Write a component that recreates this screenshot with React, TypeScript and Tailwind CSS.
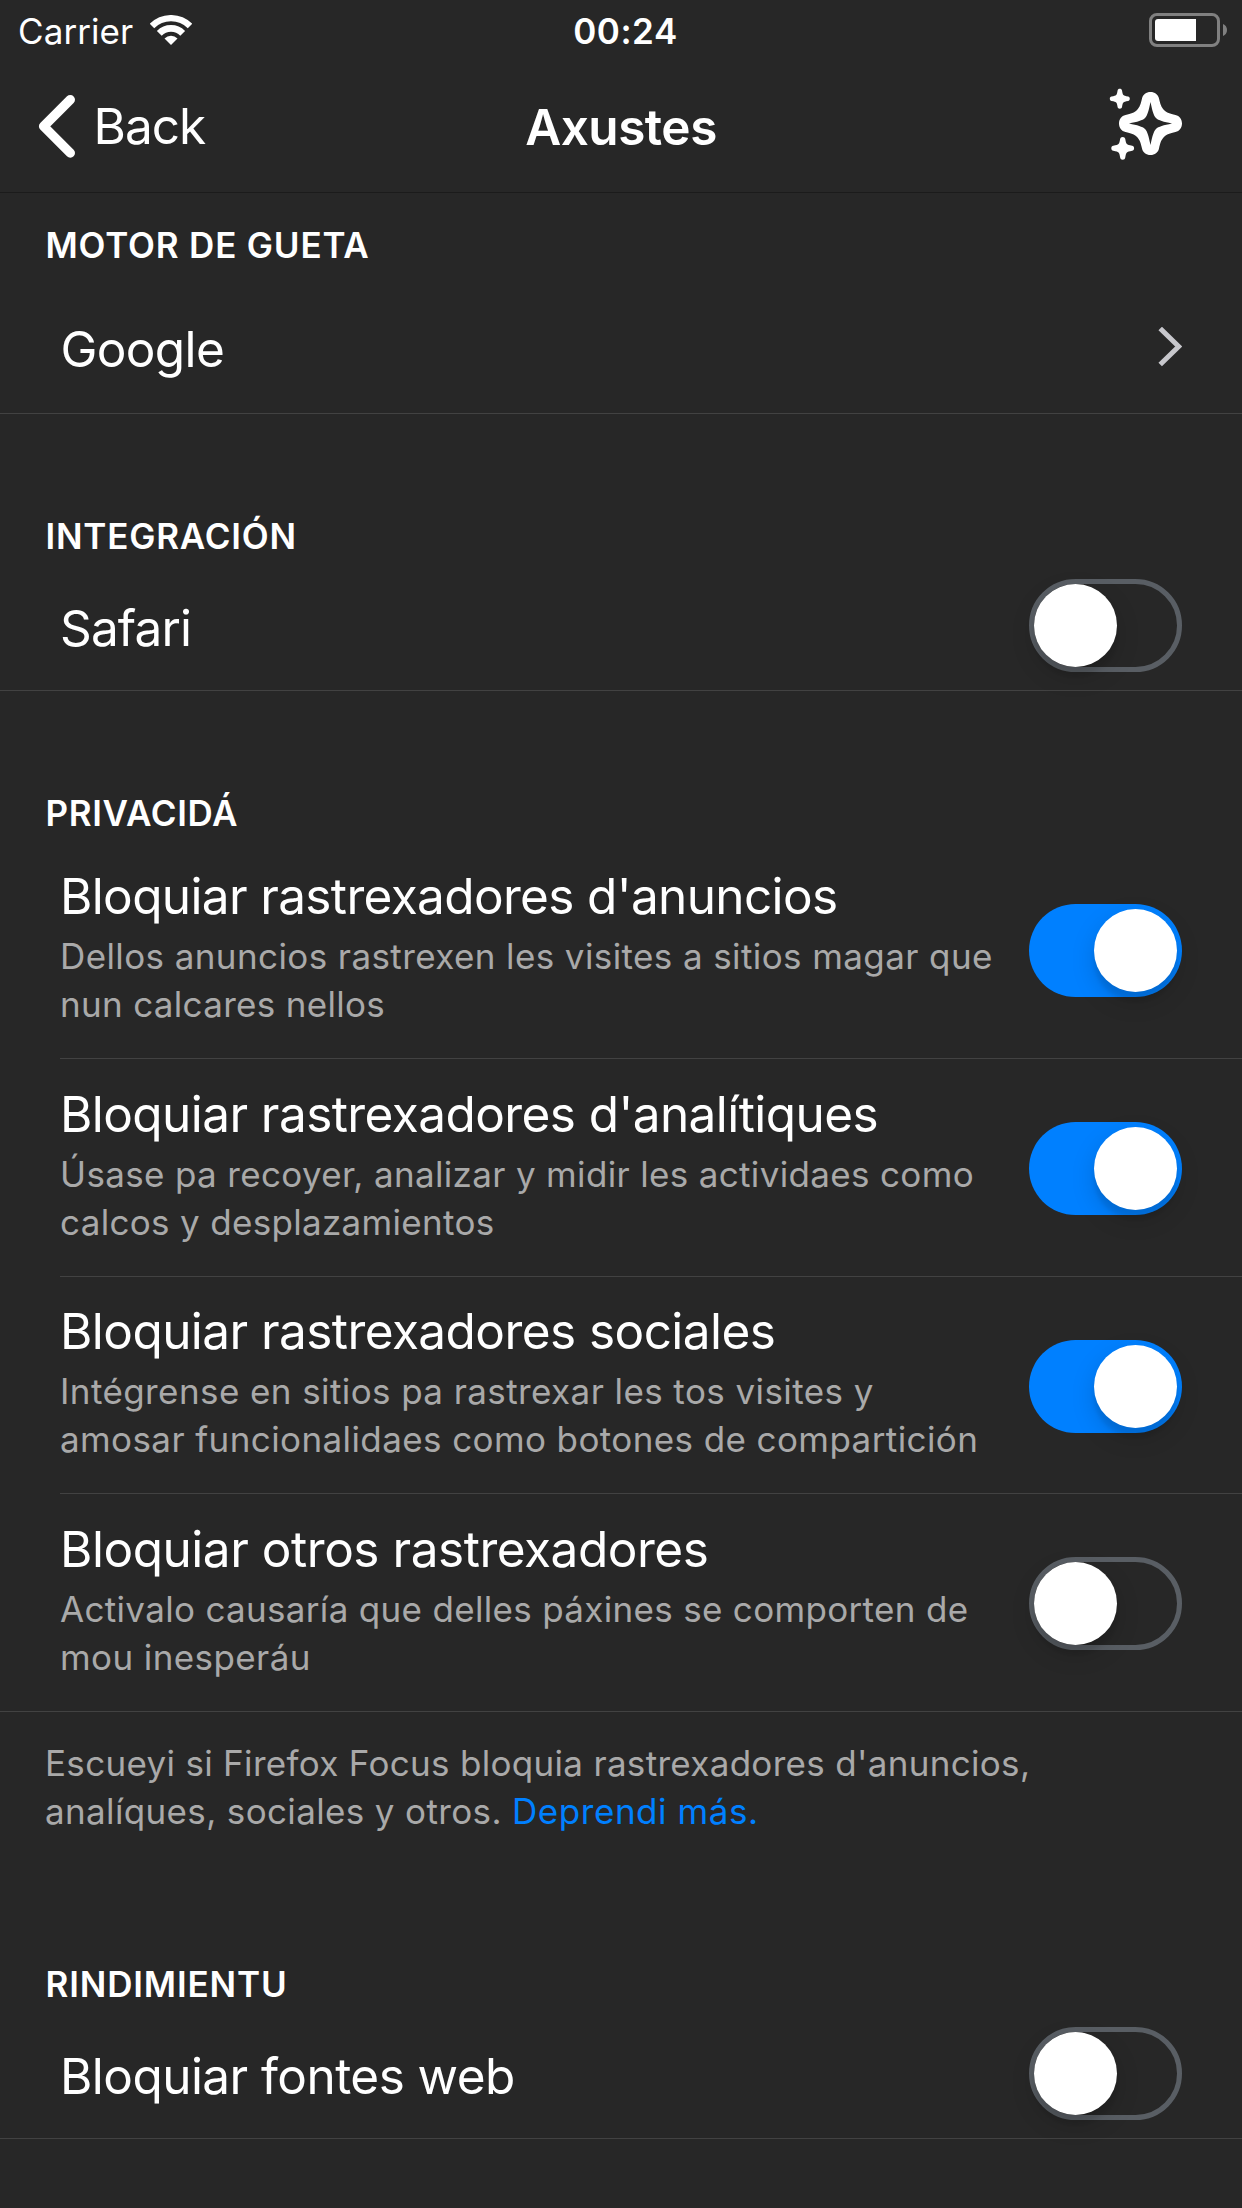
import React from "react";

type Line = { text: string; tracking: string };

function WifiIcon() {
  return (
    <svg className="h-[30px] w-[42px]" viewBox="0 0 42 30" fill="none">
      <path d="M2 11A26.9 26.9 0 0 1 40 11" stroke="#fff" strokeWidth="6.3" />
      <path d="M9.3 18.3A16.5 16.5 0 0 1 32.7 18.3" stroke="#fff" strokeWidth="6.8" />
      <path d="M21 30L14.5 23.5A9.2 9.2 0 0 1 27.5 23.5Z" fill="#fff" />
    </svg>
  );
}

function BatteryIcon() {
  return (
    <svg className="h-10 w-[84px]" viewBox="0 0 84 40">
      <rect x="4.5" y="4.5" width="68" height="31" rx="6.5" fill="none" stroke="#808080" strokeWidth="3" />
      <path d="M12 9H50V31H12Q9 31 9 28V12Q9 9 12 9Z" fill="#fff" />
      <path d="M77 14C79.500 15 81 17.300 81 20S79.500 25 77 26Z" fill="#808080" />
    </svg>
  );
}

function BackChevron() {
  return (
    <svg className="h-[72px] w-11" viewBox="0 0 44 72" fill="none">
      <path
        d="M34.300 9.700L7.600 36.300L34.300 63"
        stroke="#fff"
        strokeWidth="9.4"
        strokeLinecap="round"
        strokeLinejoin="round"
      />
    </svg>
  );
}

function DisclosureChevron() {
  return (
    <svg className="h-10 w-6" viewBox="0 0 24 40" fill="none">
      <path d="M2.200 1.500L20.700 19.500L2.200 37.500" stroke="#c7c7cc" strokeWidth="5" />
    </svg>
  );
}

const SMALL_STAR =
  "M0-10C1.3-10 2-9.3 2.2-8.3C2.700-5.500 2.900-4.400 3.700-3.700C4.400-2.900 5.500-2.700 8.300-2.200C9.300-2 10-1.300 10 0C10 1.300 9.300 2 8.300 2.200C5.500 2.700 4.400 2.900 3.700 3.700C2.900 4.400 2.700 5.500 2.200 8.300C2 9.300 1.300 10 0 10C-1.300 10-2 9.300-2.200 8.300C-2.700 5.500-2.900 4.400-3.700 3.700C-4.400 2.900-5.500 2.700-8.300 2.200C-9.300 2-10 1.300-10 0C-10-1.300-9.300-2-8.300-2.200C-5.500-2.700-4.400-2.900-3.700-3.700C-2.900-4.400-2.700-5.500-2.200-8.300C-2-9.300-1.300-10 0-10Z";

const BIG_STAR =
  "M0-31.500C4.300-31.500 7.600-29 8.500-25C9.800-19.300 10.800-16.200 13.500-13.500C16.200-10.800 19.300-9.800 25-8.500C29-7.600 31.500-4.300 31.500 0C31.500 4.300 29 7.600 25 8.500C19.300 9.800 16.200 10.800 13.500 13.500C10.800 16.200 9.800 19.300 8.500 25C7.600 29 4.300 31.500 0 31.500C-4.300 31.500-7.600 29-8.500 25C-9.800 19.300-10.800 16.200-13.500 13.500C-16.200 10.800-19.300 9.800-25 8.500C-29 7.600-31.500 4.300-31.500 0C-31.500-4.300-29-7.600-25-8.500C-19.300-9.800-16.200-10.800-13.500-13.500C-10.800-16.200-9.800-19.300-8.500-25C-7.600-29-4.300-31.500 0-31.500Z" +
  "M0-21.500C1.800-13 3-8 5.500-5.500C8-3 13-1.800 21.500 0C13 1.800 8 3 5.500 5.500C3 8 1.800 13 0 21.500C-1.800 13-3 8-5.500 5.500C-8 3-13 1.800-21.500 0C-13-1.800-8-3-5.500-5.500C-3-8-1.800-13 0-21.500Z";

function SparklesIcon() {
  return (
    <svg className="h-20 w-[76px]" viewBox="1108 86 76 80" fill="#fff">
      <path d={BIG_STAR} fillRule="evenodd" transform="translate(1150.500 123.500)" />
      <path d={SMALL_STAR} transform="translate(1119.800 98.700)" />
      <path d={SMALL_STAR} transform="translate(1122.700 148.300) scale(1.140)" />
    </svg>
  );
}

function Switch({ on, className = "" }: { on: boolean; className?: string }) {
  return (
    <div
      role="switch"
      aria-checked={on}
      className={`flex h-[93px] w-[153px] shrink-0 items-center rounded-full ${
        on ? "justify-end bg-[#0080ff] pr-[5px]" : "border-[5px] border-[#595e64]"
      } ${className}`}
    >
      <div className="size-[83px] rounded-full bg-white shadow-[0_9px_24px_rgba(0,0,0,0.15),0_9px_4px_rgba(0,0,0,0.08)]" />
    </div>
  );
}

function SectionHeader({ children, className }: { children: React.ReactNode; className: string }) {
  return <h2 className={`pl-[45.5px] text-[35px] leading-[48px] font-semibold ${className}`}>{children}</h2>;
}

function SimpleRow({ children, tracking }: { children: React.ReactNode; tracking: string }) {
  return (
    <div className="flex h-[131px] items-center justify-between border-b border-[#424242] pt-px pr-[60px] pl-[60px]">
      <span className={`pt-[5px] text-[49.5px] leading-[60px] ${tracking}`}>{children}</span>
      <Switch on={false} />
    </div>
  );
}

const trackers: { title: Line; lines: Line[]; on: boolean; box: string; switchOffset: string }[] = [
  {
    title: { text: "Bloquiar rastrexadores d'anuncios", tracking: "tracking-[-0.64px]" },
    lines: [
      { text: "Dellos anuncios rastrexen les visites a sitios magar que", tracking: "tracking-[0.4px]" },
      { text: "nun calcares nellos", tracking: "tracking-[0.31px]" },
    ],
    on: true,
    box: "h-[218px] pt-[25px]",
    switchOffset: "mt-[38px]",
  },
  {
    title: { text: "Bloquiar rastrexadores d'analítiques", tracking: "tracking-[-0.57px]" },
    lines: [
      { text: "Úsase pa recoyer, analizar y midir les actividaes como", tracking: "tracking-[0.34px]" },
      { text: "calcos y desplazamientos", tracking: "tracking-[0.32px]" },
    ],
    on: true,
    box: "h-[218px] pt-[25px]",
    switchOffset: "mt-[38px]",
  },
  {
    title: { text: "Bloquiar rastrexadores sociales", tracking: "tracking-[-0.56px]" },
    lines: [
      { text: "Intégrense en sitios pa rastrexar les tos visites y", tracking: "tracking-[0.41px]" },
      { text: "amosar funcionalidaes como botones de compartición", tracking: "tracking-[0.4px]" },
    ],
    on: true,
    box: "h-[217px] pt-[24px]",
    switchOffset: "mt-[39px]",
  },
  {
    title: { text: "Bloquiar otros rastrexadores", tracking: "tracking-[-0.46px]" },
    lines: [
      { text: "Activalo causaría que delles páxines se comporten de", tracking: "tracking-[0.32px]" },
      { text: "mou inesperáu", tracking: "tracking-[0.4px]" },
    ],
    on: false,
    box: "h-[217px] pt-[25px]",
    switchOffset: "mt-[38px]",
  },
];

export default function App() {
  return (
    <div className="h-[2208px] w-[1242px] overflow-hidden bg-[#272727] font-['Inter',sans-serif] text-white">
      <div className="grid h-[60px] grid-cols-[1fr_auto_1fr] items-center pr-3 pl-[18px] text-[35px] leading-[48px]">
        <div className="flex items-center">
          <span className="w-[132px] pt-0.5 tracking-[0.08px]">Carrier</span>
          <WifiIcon />
        </div>
        <span className="pt-0.5 pl-[3px] font-semibold tracking-[0.5px]">00:24</span>
        <div className="flex justify-end">
          <BatteryIcon />
        </div>
      </div>

      <header className="grid h-[133px] grid-cols-[1fr_auto_1fr] items-center border-b border-[#1b1b1b] text-[49.5px] leading-[60px]">
        <div className="flex items-center gap-[13.5px] pl-9">
          <BackChevron />
          <span className="tracking-[-1px]">Back</span>
        </div>
        <h1 className="pt-px font-semibold tracking-[-0.49px]">Axustes</h1>
        <div className="flex justify-end pr-[58px]">
          <SparklesIcon />
        </div>
      </header>

      <section>
        <SectionHeader className="pt-7 tracking-[0.82px]">MOTOR DE GUETA</SectionHeader>
        <div className="flex h-[145px] items-center justify-between border-b border-[#424242] pt-3 pr-[60px] pl-[60.5px]">
          <span className="pt-1 text-[49.5px] leading-[60px] tracking-[-0.65px]">Google</span>
          <DisclosureChevron />
        </div>
      </section>

      <section>
        <SectionHeader className="pt-[98px] tracking-[0.79px]">INTEGRACIÓN</SectionHeader>
        <SimpleRow tracking="tracking-[-0.85px]">Safari</SimpleRow>
      </section>

      <section>
        <SectionHeader className="pt-[98px] pb-1 tracking-[0.65px]">PRIVACIDÁ</SectionHeader>
        <ul className="border-b border-[#424242] pl-[60px]">
          {trackers.map((t, i) => (
            <li
              key={t.title.text}
              className={`flex items-start justify-between pr-[60px] ${t.box} ${
                i < trackers.length - 1 ? "border-b border-[#424242]" : ""
              }`}
            >
              <div className="whitespace-nowrap">
                <h3 className={`text-[49.5px] leading-[60px] ${t.title.tracking}`}>{t.title.text}</h3>
                <p className="pt-1.5 text-[35px] leading-[48px] text-[#a9a9a9]">
                  {t.lines.map((l) => (
                    <span key={l.text} className={`block ${l.tracking}`}>
                      {l.text}
                    </span>
                  ))}
                </p>
              </div>
              <Switch on={t.on} className={t.switchOffset} />
            </li>
          ))}
        </ul>
        <p className="pt-[27px] pl-[45px] text-[35px] leading-[48px] whitespace-nowrap text-[#a9a9a9]">
          <span className="block tracking-[0.31px]">Escueyi si Firefox Focus bloquia rastrexadores d'anuncios,</span>
          <span className="tracking-[0.36px]">analíques, sociales y otros. </span>
          <a className="tracking-[0.55px] text-[#0080ff]">Deprendi más.</a>
        </p>
      </section>

      <section>
        <SectionHeader className="pt-[125px] tracking-[0.85px]">RINDIMIENTU</SectionHeader>
        <SimpleRow tracking="tracking-[-0.55px]">Bloquiar fontes web</SimpleRow>
      </section>
    </div>
  );
}
